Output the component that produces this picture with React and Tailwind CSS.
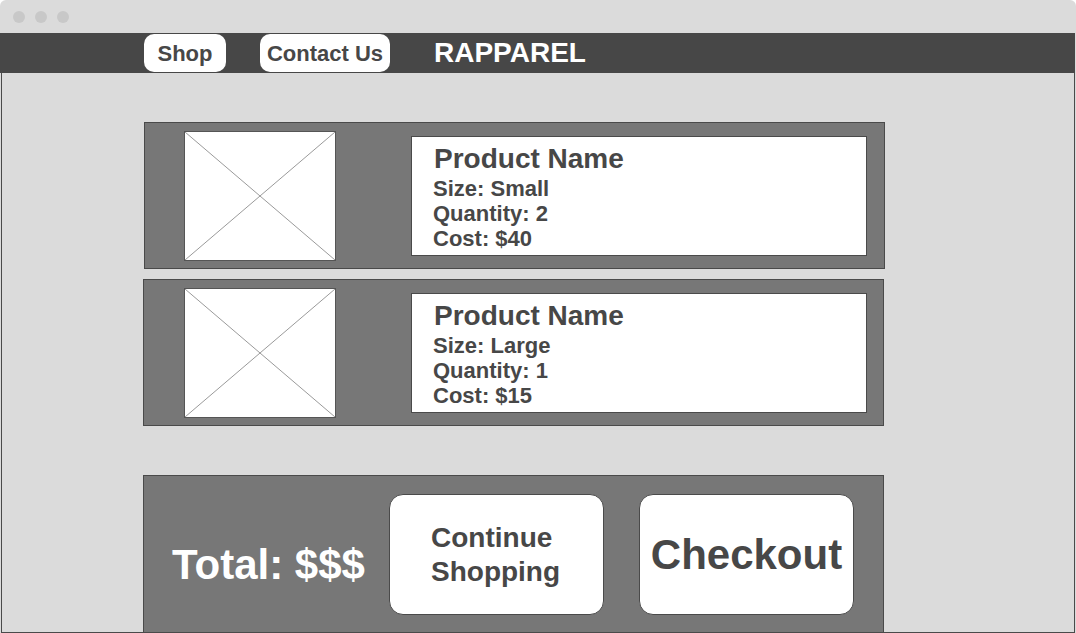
import React from 'react'

const font = { fontFamily: '"Liberation Sans", Arial, sans-serif' }

const Placeholder = () => (
  <div className="w-[152px] h-[130px] bg-white border border-[#555555] shrink-0">
    <svg width="150" height="128" viewBox="0 0 150 128" className="block">
      <line x1="0" y1="0" x2="150" y2="128" stroke="#9a9a9a" strokeWidth="1" />
      <line x1="150" y1="0" x2="0" y2="128" stroke="#9a9a9a" strokeWidth="1" />
    </svg>
  </div>
)

const CartItem = ({ size, quantity, cost, className }) => (
  <div className={`w-[741px] h-[147px] bg-[#777777] border border-[#4a4a4a] flex items-start pt-[8px] ${className}`}>
    <Placeholder />
    <div className="ml-[75px] mt-[5px] w-[456px] h-[120px] bg-white border border-[#4a4a4a] pl-[21px] pt-[6px] text-[#474747] font-bold">
      <div className="text-[28px] leading-[32px] pl-[1px]">Product Name</div>
      <div className="text-[22px] leading-[25px] mt-[1px]">Size: {size}</div>
      <div className="text-[22px] leading-[25px]">Quantity: {quantity}</div>
      <div className="text-[22px] leading-[25px]">Cost: {cost}</div>
    </div>
  </div>
)

const App = () => {
  return (
    <div className="w-[1076px] h-[633px] bg-[#dbdbdb] overflow-hidden flex flex-col rounded-t-[6px]" style={font}>
      {/* title bar */}
      <div className="h-[33px] flex items-center pl-[13px] gap-[10px] shrink-0">
        <span className="w-[12px] h-[12px] rounded-full bg-[#c8c8c8]" />
        <span className="w-[12px] h-[12px] rounded-full bg-[#c8c8c8]" />
        <span className="w-[12px] h-[12px] rounded-full bg-[#c8c8c8]" />
      </div>

      {/* nav */}
      <div className="h-[40px] w-[1075px] bg-[#474747] flex items-center pl-[144px] shrink-0">
        <button className="w-[82px] h-[38px] bg-white rounded-[10px] text-[22px] font-bold text-[#474747]">Shop</button>
        <button className="ml-[34px] w-[130px] h-[38px] bg-white rounded-[10px] text-[22px] font-bold text-[#474747]">Contact Us</button>
        <span className="ml-[44px] text-[28px] font-bold text-white">RAPPAREL</span>
      </div>

      {/* content */}
      <div className="ml-[1px] w-[1074px] flex-1 border-x border-b border-[#4a4a4a] flex flex-col">
        <CartItem size="Small" quantity="2" cost="$40" className="mt-[49px] ml-[142px] pl-[39px]" />
        <CartItem size="Large" quantity="1" cost="$15" className="mt-[10px] ml-[141px] pl-[40px]" />

        <div className="mt-[49px] ml-[141px] w-[741px] flex-1 bg-[#777777] border-x border-t border-[#4a4a4a] flex items-start pl-[28px] pt-[18px]">
          <div className="w-[217px] mt-[47px] text-[42px] leading-[48px] font-bold text-white">Total: $$$</div>
          <button className="w-[215px] h-[121px] bg-white border border-[#4a4a4a] rounded-[14px] text-left pl-[41px] text-[28px] leading-[34px] font-bold text-[#474747]">
            Continue<br />Shopping
          </button>
          <button className="ml-[35px] w-[215px] h-[121px] bg-white border border-[#4a4a4a] rounded-[14px] text-[42px] font-bold text-[#474747]">
            Checkout
          </button>
        </div>
      </div>
    </div>
  )
}

export default App
